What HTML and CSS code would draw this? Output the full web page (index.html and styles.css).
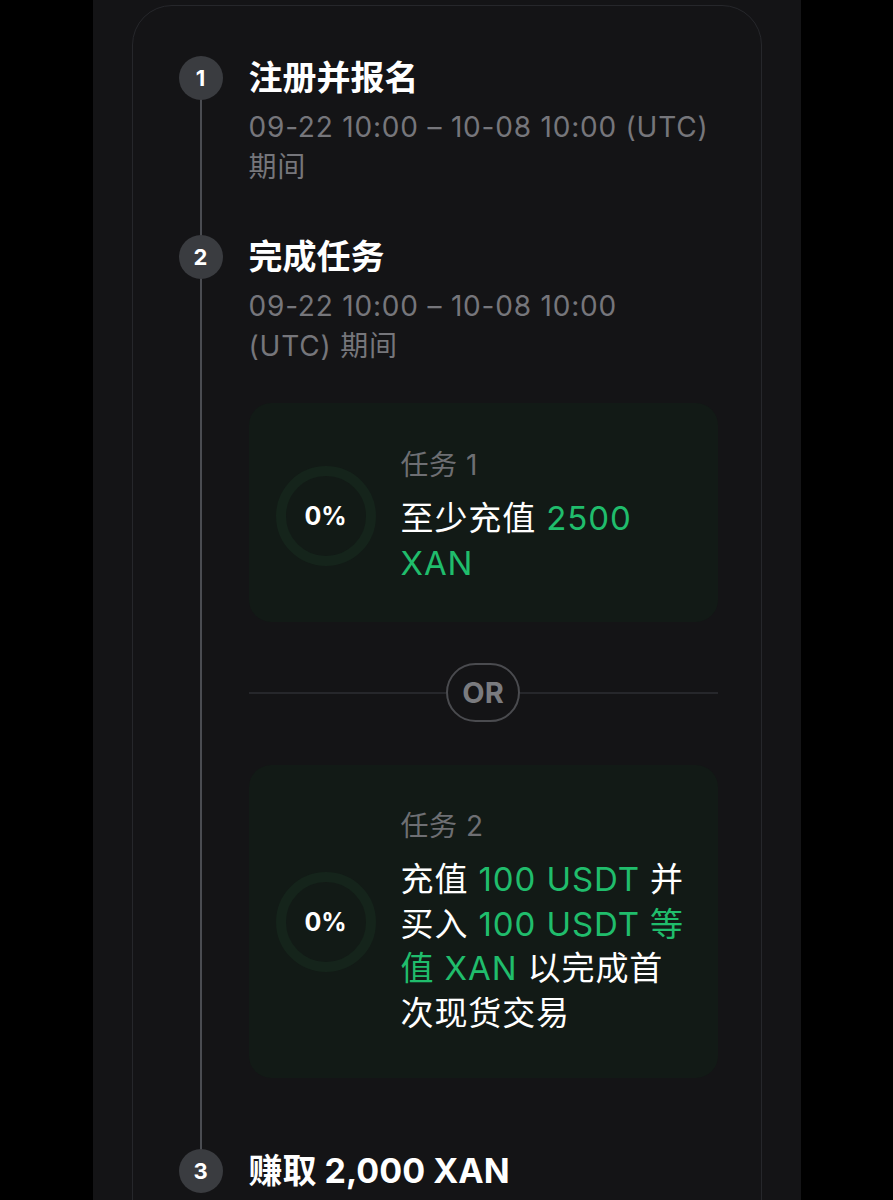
FILE: index.html
```html
<!DOCTYPE html>
<html lang="zh-CN">
<head>
    <meta charset="UTF-8">
    <meta name="viewport" content="width=device-width, initial-scale=1.0">
    <title>活动步骤</title>
    <link rel="stylesheet" href="styles.css">
</head>
<body>

<div class="panel">
    <div class="card">
        <div class="timeline">
            <!-- 第一步 -->
            <div class="step">
                <div class="step-num">1</div>
                <div class="step-body">
                    <h3 class="step-title">注册并报名</h3>
                    <p class="step-time">09-22 10:00 – 10-08 10:00 (UTC) 期间</p>
                </div>
            </div>

            <!-- 第二步 -->
            <div class="step step-tasks">
                <div class="step-num">2</div>
                <div class="step-body">
                    <h3 class="step-title">完成任务</h3>
                    <p class="step-time">09-22 10:00 – 10-08 10:00<br>(UTC) 期间</p>

                    <div class="task-list">
                        <div class="task">
                            <div class="ring">0%</div>
                            <div class="task-text">
                                <div class="task-label">任务 1</div>
                                <div class="task-desc">至少充值 <span class="hl">2500 XAN</span></div>
                            </div>
                        </div>

                        <div class="or-row">
                            <span class="or-pill">OR</span>
                        </div>

                        <div class="task task-long">
                            <div class="ring">0%</div>
                            <div class="task-text">
                                <div class="task-label">任务 2</div>
                                <div class="task-desc">充值 <span class="hl">100 USDT</span> 并买入 <span class="hl">100 USDT 等值 XAN</span> 以完成首次现货交易</div>
                            </div>
                        </div>
                    </div>
                </div>
            </div>

            <!-- 第三步 -->
            <div class="step">
                <div class="step-num">3</div>
                <div class="step-body">
                    <h3 class="step-title">赚取 2,000 XAN</h3>
                </div>
            </div>
        </div>
    </div>
</div>

</body>
</html>
```

FILE: styles.css
```css
body {
    margin: 0;
    background: #000;
    font-family: Inter, "Noto Sans CJK SC", sans-serif;
    color: #fff;
}
.panel {
    width: 708px;
    min-height: 1200px;
    margin: 0 auto;
    background: #141416;
    padding-top: 5px;
    overflow: hidden;
}
.card {
    margin: 0 39px;
    border: 1px solid #26272b;
    border-radius: 40px;
    padding: 50px 43px 160px 46px;
}
.step {
    position: relative;
    display: grid;
    grid-template-columns: 44px 1fr;
    column-gap: 26px;
    padding-bottom: 48px;
}
.step:not(:last-child)::before {
    content: "";
    position: absolute;
    left: 21px;
    top: 22px;
    bottom: -22px;
    width: 2px;
    background: #4a4c51;
}
.step-tasks {
    padding-bottom: 71px;
}
.step-num {
    position: relative;
    z-index: 1;
    width: 44px;
    height: 44px;
    border-radius: 50%;
    background: #3a3c40;
    display: flex;
    align-items: center;
    justify-content: center;
    font-size: 22px;
    font-weight: 700;
}
.step-title {
    margin: 0;
    font-size: 34px;
    line-height: 44px;
    font-weight: 700;
}
.step-time {
    margin: 7px 0 0;
    font-size: 28px;
    line-height: 40px;
    letter-spacing: 0.8px;
    color: #76767b;
}
.task-list {
    margin-top: 37px;
}
.task {
    display: flex;
    align-items: center;
    gap: 25px;
    padding: 44px 24px 37px 27px;
    border-radius: 22px;
    background: #121a16;
}
.task-long {
    padding-top: 43px;
    padding-bottom: 43px;
}
.ring {
    flex-shrink: 0;
    width: 100px;
    height: 100px;
    box-sizing: border-box;
    border: 10px solid #15241b;
    border-radius: 50%;
    display: flex;
    align-items: center;
    justify-content: center;
    font-size: 25px;
    font-weight: 700;
}
.task-label {
    font-size: 28px;
    line-height: 36px;
    letter-spacing: 0.5px;
    color: #6e6f73;
    margin-bottom: 13px;
}
.task-desc {
    font-size: 33px;
    line-height: 44.5px;
    letter-spacing: 0.9px;
}
.hl {
    color: #20bd6c;
}
.or-row {
    display: flex;
    align-items: center;
    margin: 41px 0 43px;
}
.or-row::before,
.or-row::after {
    content: "";
    flex: 1;
    height: 2px;
    background: #26272b;
}
.or-pill {
    height: 59px;
    box-sizing: border-box;
    padding: 0 14px;
    border: 2px solid #4a4b4f;
    border-radius: 30px;
    display: flex;
    align-items: center;
    font-size: 29px;
    font-weight: 700;
    color: #7a7b7f;
}
```
